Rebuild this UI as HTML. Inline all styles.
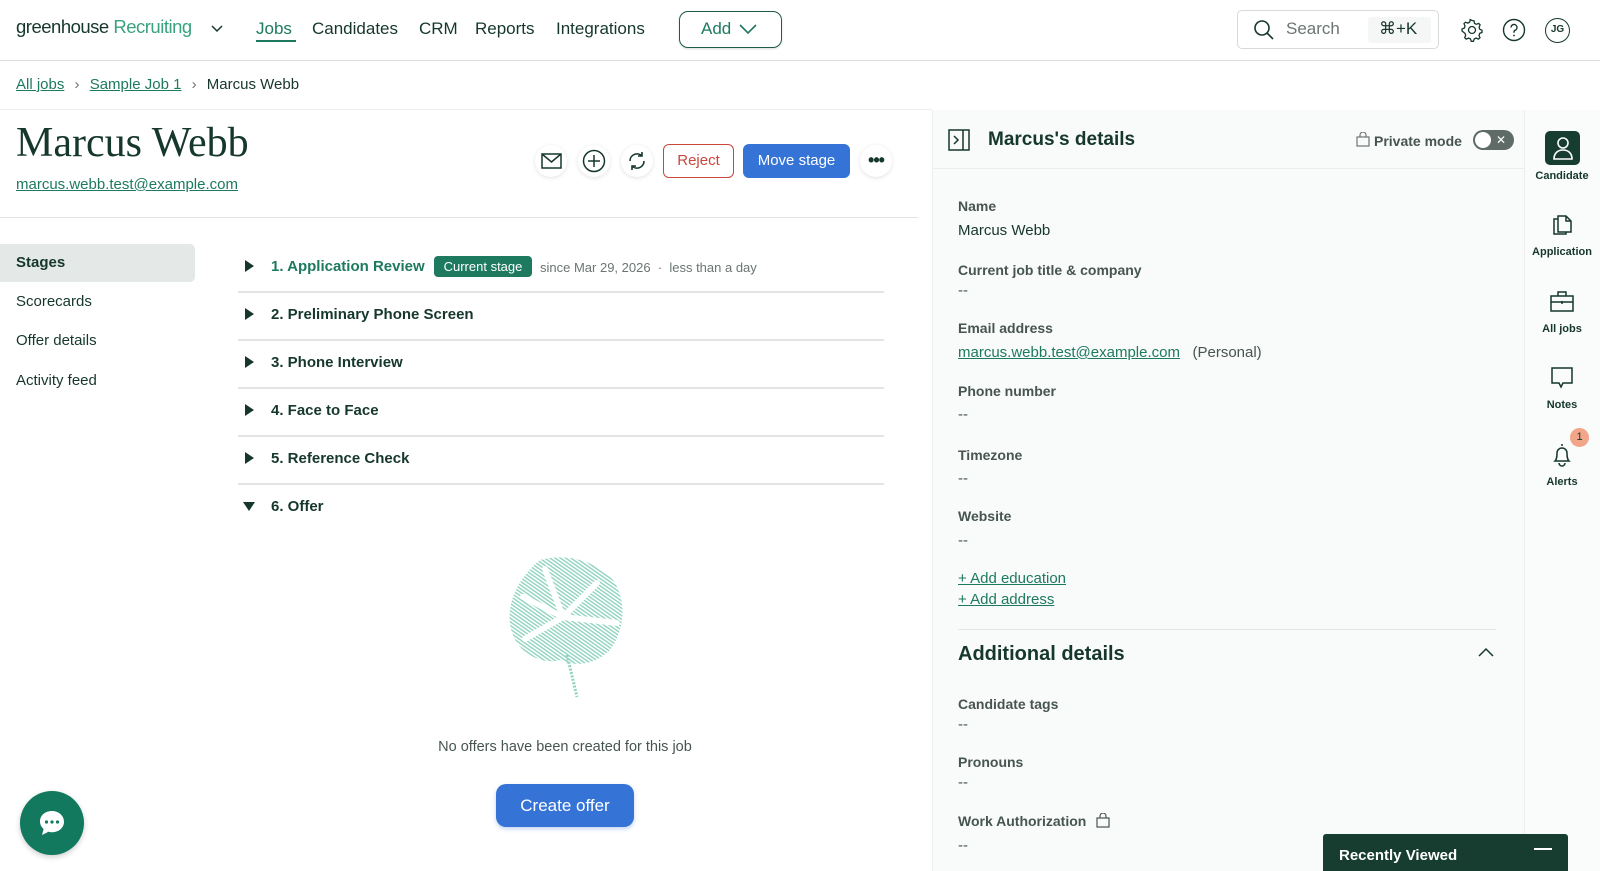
<!DOCTYPE html>
<html><head><meta charset="utf-8"><style>
*{margin:0;padding:0;box-sizing:border-box}
body{width:1600px;height:871px;overflow:hidden;background:#fff;font-family:"Liberation Sans",sans-serif;color:#15372c;position:relative}
.a{position:absolute;white-space:nowrap}
.t{line-height:20px}
.nav{font-size:17px;color:#15372c;top:19px}
.lbl{font-size:14px;font-weight:bold;color:#47554f;left:958px}
.val{font-size:15px;color:#47554f;left:958px}
.lnk{color:#1d7a5f;text-decoration:underline}
.stage{font-size:15px;font-weight:bold;color:#15372c;left:271px}
.tri{left:245px;width:0;height:0;border-top:6px solid transparent;border-bottom:6px solid transparent;border-left:9px solid #15372c}
.div{left:238px;width:646px;height:2px;background:#e3e5e4}
.rl{font-size:11px;font-weight:bold;color:#15372c;width:76px;left:1524px;text-align:center}
.circ{width:32px;height:32px;border-radius:50%;background:#fff;box-shadow:0 1px 4px rgba(0,0,0,.12)}
</style></head><body>
<!-- header -->
<div class="a" style="left:0;top:60px;width:1600px;height:1px;background:#dcdfde"></div>
<div class="a t" style="left:16px;top:17px;font-size:18.5px;letter-spacing:-0.5px"><span style="color:#15372c">greenhouse</span> <span style="color:#3aa27f">Recruiting</span></div>
<svg class="a" style="left:210px;top:24px" width="14" height="10" viewBox="0 0 14 10"><path d="M2 2l5 5 5-5" fill="none" stroke="#15372c" stroke-width="1.5"/></svg>
<div class="a nav t" style="left:256px;color:#1d7a5f">Jobs</div>
<div class="a" style="left:256px;top:40px;width:40px;height:2px;background:#1d7a5f"></div>
<div class="a nav t" style="left:312px">Candidates</div>
<div class="a nav t" style="left:419px">CRM</div>
<div class="a nav t" style="left:475px">Reports</div>
<div class="a nav t" style="left:556px">Integrations</div>
<div class="a" style="left:679px;top:11px;width:103px;height:37px;border:1.5px solid #1d5c48;border-radius:9px;box-shadow:0 1px 2px rgba(0,0,0,.15)"></div>
<div class="a nav t" style="left:701px;color:#1d7a5f">Add</div>
<svg class="a" style="left:738px;top:22px" width="20" height="14" viewBox="0 0 20 14"><path d="M2 3l8 8 8-8" fill="none" stroke="#1d7a5f" stroke-width="1.6"/></svg>
<div class="a" style="left:1237px;top:10px;width:202px;height:39px;border:1px solid #d6dad8;border-radius:5px"></div>
<svg class="a" style="left:1253px;top:19px" width="22" height="22" viewBox="0 0 22 22"><circle cx="9" cy="9" r="7" fill="none" stroke="#15372c" stroke-width="1.6"/><path d="M14 14l6 6" stroke="#15372c" stroke-width="1.6"/></svg>
<div class="a nav t" style="left:1286px;color:#6b7571">Search</div>
<div class="a" style="left:1368px;top:17px;width:63px;height:26px;background:#f5f6f6;border-radius:3px"></div>
<div class="a nav t" style="left:1379px">⌘+K</div>
<svg class="a" style="left:1460px;top:18px" width="24" height="24" viewBox="0 0 24 24"><path d="M12 2.5l2 .3.5 2.5 1.8 1 2.4-.9 1.4 1.5-1 2.3.6 2 2.3 1.1v2.1l-2.3 1-.7 2 1 2.3-1.5 1.4-2.3-1-1.9.8-.9 2.4h-2.1l-.9-2.4-1.9-.8-2.3 1-1.5-1.4 1-2.3-.7-2L2 13v-2l2.4-1 .6-2-1-2.3L5.5 4.2l2.4.9 1.8-1 .5-2.5z" fill="none" stroke="#15372c" stroke-width="1.3"/><circle cx="12" cy="12" r="3.5" fill="none" stroke="#15372c" stroke-width="1.3"/></svg>
<svg class="a" style="left:1502px;top:18px" width="24" height="24" viewBox="0 0 24 24"><circle cx="12" cy="12" r="10.5" fill="none" stroke="#15372c" stroke-width="1.4"/><path d="M9 9.5a3 3 0 1 1 4 2.8c-.8.4-1 1-1 2v.5" fill="none" stroke="#15372c" stroke-width="1.4"/><circle cx="12" cy="17.5" r=".9" fill="#15372c"/></svg>
<div class="a" style="left:1545px;top:18px;width:25px;height:25px;border:1.4px solid #15372c;border-radius:50%;font-size:10px;font-weight:bold;text-align:center;line-height:22px">JG</div>
<!-- breadcrumb -->
<div class="a t" style="left:16px;top:75px;font-size:15px"><span class="lnk">All jobs</span> <span style="color:#6b7571;margin:0 6px">›</span> <span class="lnk">Sample Job 1</span> <span style="color:#6b7571;margin:0 6px">›</span> Marcus Webb</div>
<div class="a" style="left:0;top:109px;width:932px;height:1px;background:#eceeed"></div>
<!-- title -->
<div class="a" style="left:16px;top:118px;font-family:'Liberation Serif',serif;font-size:42px;line-height:50px;color:#15372c">Marcus Webb</div>
<div class="a t lnk" style="left:16px;top:175px;font-size:15px">marcus.webb.test@example.com</div>
<div class="a circ" style="left:535px;top:145px"></div>
<svg class="a" style="left:541px;top:153px" width="21" height="16" viewBox="0 0 21 16"><rect x="1" y="1" width="19" height="14" fill="none" stroke="#15372c" stroke-width="1.5"/><path d="M1 1l9.5 8L20 1" fill="none" stroke="#15372c" stroke-width="1.5"/></svg>
<div class="a circ" style="left:578px;top:145px"></div>
<svg class="a" style="left:582px;top:149px" width="24" height="24" viewBox="0 0 24 24"><circle cx="12" cy="12" r="10.5" fill="none" stroke="#15372c" stroke-width="1.5"/><path d="M12 6v12M6 12h12" stroke="#15372c" stroke-width="1.5"/></svg>
<div class="a circ" style="left:621px;top:145px"></div>
<svg class="a" style="left:626px;top:150px" width="22" height="22" viewBox="0 0 22 22"><path d="M4 11a7 7 0 0 1 12-5M18 11a7 7 0 0 1-12 5" fill="none" stroke="#15372c" stroke-width="1.6"/><path d="M16 2v4h-4M6 20v-4h4" fill="none" stroke="#15372c" stroke-width="1.6"/></svg>
<div class="a" style="left:663px;top:144px;width:71px;height:34px;border:1.5px solid #c9473d;border-radius:6px;color:#c9473d;font-size:15px;line-height:31px;text-align:center">Reject</div>
<div class="a" style="left:743px;top:144px;width:107px;height:34px;background:#3574d6;border-radius:6px;color:#fff;font-size:15px;line-height:34px;text-align:center">Move stage</div>
<div class="a circ" style="left:860px;top:145px"></div>
<div class="a" style="left:860px;top:145px;width:32px;line-height:30px;text-align:center;font-size:18px;font-weight:bold;letter-spacing:-1px">•••</div>
<div class="a" style="left:0;top:217px;width:918px;height:1px;background:#e3e5e4"></div>
<!-- left nav -->
<div class="a" style="left:0;top:244px;width:195px;height:38px;background:#e4e8e6;border-radius:0 5px 5px 0"></div>
<div class="a t" style="left:16px;top:253px;font-size:15px;font-weight:bold">Stages</div>
<div class="a t" style="left:16px;top:292px;font-size:15px">Scorecards</div>
<div class="a t" style="left:16px;top:331px;font-size:15px">Offer details</div>
<div class="a t" style="left:16px;top:371px;font-size:15px">Activity feed</div>
<!-- stages -->
<div class="a tri" style="top:260px"></div>
<div class="a stage t" style="top:257px;color:#1d7a5f">1. Application Review</div>
<div class="a" style="left:434px;top:256px;width:98px;height:21px;background:#1d7a5f;border-radius:4px;color:#fff;font-size:13px;line-height:21px;text-align:center">Current stage</div>
<div class="a t" style="left:540px;top:258px;font-size:13px;color:#6b7571">since Mar 29, 2026 &nbsp;·&nbsp; less than a day</div>
<div class="a div" style="top:291px"></div>
<div class="a tri" style="top:308px"></div>
<div class="a stage t" style="top:305px">2. Preliminary Phone Screen</div>
<div class="a div" style="top:339px"></div>
<div class="a tri" style="top:356px"></div>
<div class="a stage t" style="top:353px">3. Phone Interview</div>
<div class="a div" style="top:387px"></div>
<div class="a tri" style="top:404px"></div>
<div class="a stage t" style="top:401px">4. Face to Face</div>
<div class="a div" style="top:435px"></div>
<div class="a tri" style="top:452px"></div>
<div class="a stage t" style="top:449px">5. Reference Check</div>
<div class="a div" style="top:483px"></div>
<div class="a" style="left:243px;top:502px;width:0;height:0;border-left:6px solid transparent;border-right:6px solid transparent;border-top:9px solid #15372c"></div>
<div class="a stage t" style="top:497px">6. Offer</div>
<!-- leaf -->
<svg class="a" style="left:505px;top:555px" width="122" height="146" viewBox="0 0 122 146">
<defs><pattern id="h" width="3" height="3" patternUnits="userSpaceOnUse" patternTransform="rotate(35)"><rect width="3" height="1.4" fill="#8fd3bf"/></pattern></defs>
<path d="M35 5 C60 -2 90 5 108 25 C122 45 120 75 105 95 C90 110 70 112 55 105 C40 110 15 100 8 80 C0 60 5 30 35 5Z" fill="url(#h)"/>
<g stroke="#fff" stroke-width="6" fill="none" stroke-linecap="round"><path d="M58 62 L18 42"/><path d="M58 62 L40 14"/><path d="M58 62 L92 28"/><path d="M58 62 L112 68"/><path d="M58 62 L20 84"/></g>
<path d="M62 100 L72 142" stroke="#8fd3bf" stroke-width="3" stroke-dasharray="2 1.5"/>
</svg>
<div class="a t" style="left:365px;top:737px;width:400px;text-align:center;font-size:14.5px;color:#47554f">No offers have been created for this job</div>
<div class="a" style="left:496px;top:784px;width:138px;height:43px;background:#3574d6;border-radius:10px;color:#fff;font-size:17px;line-height:43px;text-align:center;box-shadow:0 2px 4px rgba(53,116,214,.3)">Create offer</div>
<!-- chat -->
<div class="a" style="left:20px;top:791px;width:64px;height:64px;border-radius:50%;background:#12785e;box-shadow:0 2px 6px rgba(0,0,0,.2)"></div>
<svg class="a" style="left:37px;top:808px" width="30" height="30" viewBox="0 0 30 30"><path d="M15 3C8 3 3 7.5 3 13.5c0 3 1.4 5.6 3.6 7.5L5 27l6.5-3.2c1.1.3 2.3.5 3.5.5 7 0 12-4.7 12-10.5S22 3 15 3z" fill="#fff"/><circle cx="9.5" cy="14" r="1.6" fill="#12785e"/><circle cx="15" cy="14" r="1.6" fill="#12785e"/><circle cx="20.5" cy="14" r="1.6" fill="#12785e"/></svg>
<!-- right panel -->
<div class="a" style="left:932px;top:110px;width:592px;height:761px;background:#f9fafa;border-left:1px solid #eceeed"></div>
<div class="a" style="left:932px;top:168px;width:592px;height:1px;background:#eceeed"></div>
<div class="a" style="left:1524px;top:110px;width:76px;height:761px;background:#fafbfb;border-left:1px solid #eceeed"></div>
<svg class="a" style="left:948px;top:129px" width="22" height="22" viewBox="0 0 22 22"><rect x="1" y="1" width="20" height="20" fill="none" stroke="#15372c" stroke-width="1.5"/><path d="M15 1v20M6 7l4 4-4 4" fill="none" stroke="#15372c" stroke-width="1.5"/></svg>
<div class="a" style="left:988px;top:127px;font-size:19px;font-weight:bold;line-height:26px">Marcus's details</div>
<svg class="a" style="left:1356px;top:132px" width="14" height="15" viewBox="0 0 14 15"><rect x="1" y="5" width="12" height="9" fill="none" stroke="#6b7571" stroke-width="1.2"/><path d="M4 5V3a3 3 0 0 1 6 0v2" fill="none" stroke="#6b7571" stroke-width="1.2"/></svg>
<div class="a t" style="left:1374px;top:131px;font-size:14px;font-weight:bold;color:#47554f">Private mode</div>
<div class="a" style="left:1473px;top:130px;width:41px;height:20px;border-radius:10px;background:#5f6b66"></div>
<div class="a" style="left:1475px;top:132px;width:16px;height:16px;border-radius:50%;background:#fff"></div>
<div class="a" style="left:1496px;top:130px;font-size:12px;color:#fff;line-height:20px">✕</div>
<div class="a t lbl" style="top:196px">Name</div>
<div class="a t val" style="top:221px;color:#15372c">Marcus Webb</div>
<div class="a t lbl" style="top:260px">Current job title &amp; company</div>
<div class="a t val" style="top:281px">--</div>
<div class="a t lbl" style="top:318px">Email address</div>
<div class="a t val" style="top:343px"><span class="lnk">marcus.webb.test@example.com</span> &nbsp; (Personal)</div>
<div class="a t lbl" style="top:381px">Phone number</div>
<div class="a t val" style="top:405px">--</div>
<div class="a t lbl" style="top:445px">Timezone</div>
<div class="a t val" style="top:469px">--</div>
<div class="a t lbl" style="top:506px">Website</div>
<div class="a t val" style="top:531px">--</div>
<div class="a t val lnk" style="top:569px">+ Add education</div>
<div class="a t val lnk" style="top:590px">+ Add address</div>
<div class="a" style="left:958px;top:629px;width:538px;height:1px;background:#e3e5e4"></div>
<div class="a" style="left:958px;top:641px;font-size:20px;font-weight:bold;line-height:26px;color:#15372c">Additional details</div>
<svg class="a" style="left:1477px;top:646px" width="18" height="12" viewBox="0 0 18 12"><path d="M2 10l7-7 7 7" fill="none" stroke="#15372c" stroke-width="1.5"/></svg>
<div class="a t lbl" style="top:694px">Candidate tags</div>
<div class="a t val" style="top:715px">--</div>
<div class="a t lbl" style="top:752px">Pronouns</div>
<div class="a t val" style="top:773px">--</div>
<div class="a t lbl" style="top:811px">Work Authorization</div>
<svg class="a" style="left:1096px;top:813px" width="14" height="15" viewBox="0 0 14 15"><rect x="1" y="5" width="12" height="9" fill="none" stroke="#47554f" stroke-width="1.2"/><path d="M4 5V3a3 3 0 0 1 6 0v2" fill="none" stroke="#47554f" stroke-width="1.2"/></svg>
<div class="a t val" style="top:836px">--</div>
<!-- rail -->
<div class="a" style="left:1545px;top:131px;width:35px;height:34px;border-radius:5px;background:#173d30"></div>
<svg class="a" style="left:1551px;top:135px" width="24" height="26" viewBox="0 0 24 26"><circle cx="12" cy="8" r="5" fill="none" stroke="#fff" stroke-width="1.6"/><path d="M3 24c0-6 4-9 9-9s9 3 9 9z" fill="none" stroke="#fff" stroke-width="1.6"/></svg>
<div class="a rl" style="top:170px">Candidate</div>
<svg class="a" style="left:1551px;top:212px" width="22" height="24" viewBox="0 0 22 24"><path d="M7 4h8l5 5v11H7z" fill="none" stroke="#15372c" stroke-width="1.5"/><path d="M15 4v5h5M7 7H3v15h12v-2" fill="none" stroke="#15372c" stroke-width="1.5"/></svg>
<div class="a rl" style="top:246px">Application</div>
<svg class="a" style="left:1550px;top:290px" width="24" height="22" viewBox="0 0 24 22"><rect x="1" y="6" width="22" height="15" fill="none" stroke="#15372c" stroke-width="1.5"/><path d="M8 6V2h8v4M1 12h22M12 11v3" fill="none" stroke="#15372c" stroke-width="1.5"/></svg>
<div class="a rl" style="top:323px">All jobs</div>
<svg class="a" style="left:1551px;top:367px" width="22" height="22" viewBox="0 0 22 22"><path d="M1 1h20v15H12l-2 4-2-4H1z" fill="none" stroke="#15372c" stroke-width="1.5"/></svg>
<div class="a rl" style="top:399px">Notes</div>
<svg class="a" style="left:1551px;top:442px" width="22" height="26" viewBox="0 0 22 26"><path d="M11 2v2M4 19c2-2 2-5 2-8a5 5 0 0 1 10 0c0 3 0 6 2 8z" fill="none" stroke="#15372c" stroke-width="1.5"/><path d="M8 21a3 3 0 0 0 6 0" fill="none" stroke="#15372c" stroke-width="1.5"/></svg>
<div class="a" style="left:1570px;top:428px;width:19px;height:19px;border-radius:50%;background:#f3a589;font-size:11px;line-height:19px;text-align:center;color:#15372c">1</div>
<div class="a rl" style="top:476px">Alerts</div>
<!-- recently viewed -->
<div class="a" style="left:1323px;top:834px;width:245px;height:37px;background:#173d30;border-radius:3px 3px 0 0"></div>
<div class="a" style="left:1339px;top:846px;font-size:15px;font-weight:bold;color:#fff;line-height:20px">Recently Viewed</div>
<div class="a" style="left:1534px;top:848px;width:18px;height:2px;background:#fff"></div>
</body></html>
